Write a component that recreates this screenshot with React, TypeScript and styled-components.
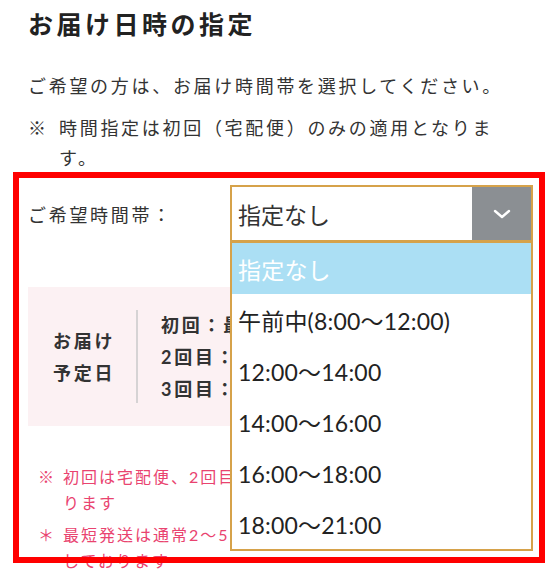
import styled, { createGlobalStyle } from "styled-components"

const GlobalStyle = createGlobalStyle`
  * {
    box-sizing: border-box;
  }
  body {
    margin: 0;
    background: #fff;
    font-family: Lato, "Noto Sans CJK JP", sans-serif;
    color: #333;
  }
`

const options = [
  "指定なし",
  "午前中(8:00～12:00)",
  "12:00～14:00",
  "14:00～16:00",
  "16:00～18:00",
  "18:00～21:00",
]

const schedule = ["初回：最短翌日以降", "2回目：初回の約1ヶ月後", "3回目：2回目の約1ヶ月後"]

const Chevron = () => (
  <svg width="18" height="10" viewBox="0 0 18 10">
    <polyline points="2,2 9,8 16,2" fill="none" stroke="#fff" strokeWidth="2.4" strokeLinecap="round" strokeLinejoin="round" />
  </svg>
)

const App = () => {
  return (
    <Page>
      <GlobalStyle />
      <Title>お届け日時の指定</Title>
      <Lead>ご希望の方は、お届け時間帯を選択してください。</Lead>
      <Note>
        <Mark>※</Mark>
        <span>時間指定は初回（宅配便）のみの適用となります。</span>
      </Note>

      <SelectRow>
        <Label>ご希望時間帯：</Label>
        <SelectWrap>
          <SelectBox>
            <Value>指定なし</Value>
            <ArrowButton>
              <Chevron />
            </ArrowButton>
          </SelectBox>
          <OptionList>
            {options.map((o, i) => (
              <Option key={o} $active={i === 0}>
                {o}
              </Option>
            ))}
          </OptionList>
        </SelectWrap>
      </SelectRow>

      <ScheduleBox>
        <ScheduleHead>
          お届け
          <br />
          予定日
        </ScheduleHead>
        <Divider />
        <ScheduleList>
          {schedule.map((s) => (
            <li key={s}>{s}</li>
          ))}
        </ScheduleList>
      </ScheduleBox>

      <Notes>
        <NoteItem>
          <NoteMark>※</NoteMark>
          <NoteText>初回は宅配便、2回目以降はメール便でのお届けとなります</NoteText>
        </NoteItem>
        <NoteItem>
          <NoteMark>＊</NoteMark>
          <NoteText>最短発送は通常2～5営業日以内での順次発送を予定しております</NoteText>
        </NoteItem>
      </Notes>

      <Frame />
    </Page>
  )
}

export default App

const Page = styled.div`
  position: relative;
  width: 560px;
  height: 580px;
  overflow: hidden;
  padding: 7px 27px 0 28px;
`

const Title = styled.h2`
  margin: 0;
  font-size: 25px;
  line-height: 34px;
  font-weight: 700;
  letter-spacing: 0.14em;
  color: #222;
`

const Lead = styled.p`
  margin: 30px 0 0;
  max-width: 481px;
  font-size: 18px;
  line-height: 30px;
  letter-spacing: 0.15em;
`

const Note = styled.p`
  display: flex;
  margin: 12px 0 0;
  max-width: 481px;
  font-size: 18px;
  line-height: 30px;
  letter-spacing: 0.15em;
`

const Mark = styled.span`
  flex: 0 0 31px;
`

const SelectRow = styled.div`
  display: flex;
  align-items: center;
  margin-top: 12px;
  height: 57px;
`

const Label = styled.div`
  flex: 0 0 202px;
  font-size: 18px;
  letter-spacing: 0.15em;
`

const SelectWrap = styled.div`
  position: relative;
  flex: 0 0 303px;
  height: 57px;
`

const SelectBox = styled.div`
  display: flex;
  height: 100%;
  border: 2px solid #d6a24a;
  background: #fff;
`

const Value = styled.div`
  flex: 1;
  display: flex;
  align-items: center;
  padding-left: 6px;
  font-size: 23px;
  color: #333;
`

const ArrowButton = styled.div`
  flex: 0 0 59px;
  display: flex;
  align-items: center;
  justify-content: center;
  background: #8b8f93;
`

const OptionList = styled.ul`
  position: absolute;
  z-index: 2;
  top: 56px;
  left: 0;
  width: 303px;
  margin: 0;
  padding: 0;
  list-style: none;
  border: 2px solid #d6a24a;
  background: #fff;
`

const Option = styled.li<{ $active: boolean }>`
  display: flex;
  align-items: center;
  height: 51px;
  padding-left: 6px;
  font-size: 23px;
  letter-spacing: 0.2px;
  color: ${(p) => (p.$active ? "#fff" : "#222")};
  background: ${(p) => (p.$active ? "#abdff4" : "#fff")};
`

const ScheduleBox = styled.div`
  display: flex;
  align-items: center;
  margin-top: 45px;
  height: 139px;
  padding: 0 25px;
  background: #fcf1f3;
`

const ScheduleHead = styled.div`
  flex: 0 0 62px;
  font-size: 18px;
  font-weight: 700;
  line-height: 32px;
  letter-spacing: 0.15em;
  white-space: nowrap;
`

const Divider = styled.div`
  flex: 0 0 2px;
  height: 93px;
  margin: 0 23px 0 21px;
  background: #d6d3d4;
`

const ScheduleList = styled.ul`
  margin: 0;
  padding: 0;
  list-style: none;
  font-size: 18px;
  font-weight: 700;
  line-height: 32px;
  letter-spacing: 0.15em;
  white-space: nowrap;
`

const Notes = styled.div`
  margin-top: 38px;
  padding-left: 10px;
  color: #e9436f;
  font-size: 16px;
  line-height: 26px;
  letter-spacing: 2px;
`

const NoteItem = styled.div`
  display: flex;
  & + & {
    margin-top: 6px;
  }
`

const NoteMark = styled.span`
  flex: 0 0 25px;
`

const NoteText = styled.span`
  max-width: 430px;
`

const Frame = styled.div`
  position: absolute;
  z-index: 5;
  left: 13px;
  top: 172px;
  width: 532px;
  height: 391px;
  border: 6px solid #ff0000;
  pointer-events: none;
`
